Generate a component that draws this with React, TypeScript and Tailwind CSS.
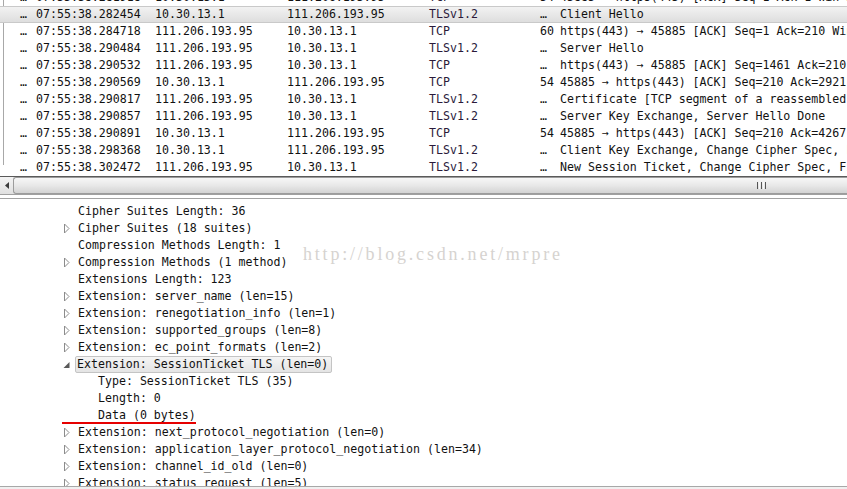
import React from "react";

const packets = [
  { t: "07:55:38.281918", s: "10.30.13.1", d: "111.206.193.95", p: "TCP", l: "54", i: "45885 → https(443) [ACK] Seq=1 Ack=1 Win=29312 Len=0" },
  { t: "07:55:38.282454", s: "10.30.13.1", d: "111.206.193.95", p: "TLSv1.2", l: "…", i: "Client Hello", sel: true },
  { t: "07:55:38.284718", s: "111.206.193.95", d: "10.30.13.1", p: "TCP", l: "60", i: "https(443) → 45885 [ACK] Seq=1 Ack=210 Win=30336 Len=0" },
  { t: "07:55:38.290484", s: "111.206.193.95", d: "10.30.13.1", p: "TLSv1.2", l: "…", i: "Server Hello" },
  { t: "07:55:38.290532", s: "111.206.193.95", d: "10.30.13.1", p: "TCP", l: "…", i: "https(443) → 45885 [ACK] Seq=1461 Ack=210 Win=30336" },
  { t: "07:55:38.290569", s: "10.30.13.1", d: "111.206.193.95", p: "TCP", l: "54", i: "45885 → https(443) [ACK] Seq=210 Ack=2921 Win=35072" },
  { t: "07:55:38.290817", s: "111.206.193.95", d: "10.30.13.1", p: "TLSv1.2", l: "…", i: "Certificate [TCP segment of a reassembled PDU]" },
  { t: "07:55:38.290857", s: "111.206.193.95", d: "10.30.13.1", p: "TLSv1.2", l: "…", i: "Server Key Exchange, Server Hello Done" },
  { t: "07:55:38.290891", s: "10.30.13.1", d: "111.206.193.95", p: "TCP", l: "54", i: "45885 → https(443) [ACK] Seq=210 Ack=4267 Win=37888" },
  { t: "07:55:38.298368", s: "10.30.13.1", d: "111.206.193.95", p: "TLSv1.2", l: "…", i: "Client Key Exchange, Change Cipher Spec, Finished" },
  { t: "07:55:38.302472", s: "111.206.193.95", d: "10.30.13.1", p: "TLSv1.2", l: "…", i: "New Session Ticket, Change Cipher Spec, Finished" },
];

type D = { text: string; kind: "none" | "closed" | "open" | "child"; sel?: boolean };
const details: D[] = [
  { text: "Cipher Suites Length: 36", kind: "none" },
  { text: "Cipher Suites (18 suites)", kind: "closed" },
  { text: "Compression Methods Length: 1", kind: "none" },
  { text: "Compression Methods (1 method)", kind: "closed" },
  { text: "Extensions Length: 123", kind: "none" },
  { text: "Extension: server_name (len=15)", kind: "closed" },
  { text: "Extension: renegotiation_info (len=1)", kind: "closed" },
  { text: "Extension: supported_groups (len=8)", kind: "closed" },
  { text: "Extension: ec_point_formats (len=2)", kind: "closed" },
  { text: "Extension: SessionTicket TLS (len=0)", kind: "open", sel: true },
  { text: "Type: SessionTicket TLS (35)", kind: "child" },
  { text: "Length: 0", kind: "child" },
  { text: "Data (0 bytes)", kind: "child" },
  { text: "Extension: next_protocol_negotiation (len=0)", kind: "closed" },
  { text: "Extension: application_layer_protocol_negotiation (len=34)", kind: "closed" },
  { text: "Extension: channel_id_old (len=0)", kind: "closed" },
  { text: "Extension: status_request (len=5)", kind: "closed" },
];

function Closed() {
  return (
    <svg width="7" height="11" viewBox="0 0 7 11" className="block">
      <path d="M1.5 1 L6 5.5 L1.5 10 Z" fill="#fff" stroke="#8c8c8c" strokeWidth="1" />
    </svg>
  );
}
function Open() {
  return (
    <svg width="7" height="10" viewBox="0 0 7 10" className="block">
      <path d="M6.5 2 L6.5 8 L0.5 8 Z" fill="#595959" />
    </svg>
  );
}

export default function App() {
  return (
    <div
      className="w-[847px] h-[489px] overflow-hidden bg-white text-[#111] flex flex-col"
      style={{ fontFamily: '"DejaVu Sans Mono", "Liberation Mono", monospace' }}
    >
      {/* packet list */}
      <div className="h-[176px] shrink-0 overflow-hidden pl-[3px]">
        <div className="h-full border-l border-[#a8a8a8] text-[11.6px] leading-[17px]">
          {packets.map((r, idx) => (
            <div
              key={idx}
              className={
                "flex h-[17px] whitespace-nowrap pl-[16px] " +
                (idx === 0 ? "-mt-[11px] " : "") +
                (r.sel
                  ? "bg-gradient-to-b from-[#f2f2f2] to-[#dedede] border-y border-[#c9c9c9] -ml-[4px] pl-[20px] leading-[15px]"
                  : "")
              }
            >
              <span className="w-[16px] shrink-0">…</span>
              <span className="w-[119px] shrink-0">{r.t}</span>
              <span className="w-[132px] shrink-0">{r.s}</span>
              <span className="w-[142px] shrink-0">{r.d}</span>
              <span className="w-[111px] shrink-0 text-[#2a1a3a]">{r.p}</span>
              <span className="w-[20px] shrink-0">{r.l}</span>
              <span className="shrink-0">{r.i}</span>
            </div>
          ))}
        </div>
      </div>

      {/* horizontal scrollbar */}
      <div className="h-[19px] shrink-0 border-t border-[#5a5a5a] border-b border-b-[#a0a0a0] bg-[#e9e9e9] flex">
        <div className="w-[13px] h-full flex items-center justify-center bg-gradient-to-b from-[#f4f4f4] to-[#e0e0e0]">
          <svg width="4" height="7" viewBox="0 0 4 7">
            <path d="M4 0 L0 3.5 L4 7 Z" fill="#3c3c3c" />
          </svg>
        </div>
        <div className="flex-1 h-full rounded-l-[3px] border border-[#9c9c9c] border-r-0 bg-gradient-to-b from-[#f7f7f7] via-[#e8e8e8] to-[#d3d3d3] flex items-center">
          <div className="ml-[743px] flex gap-[1px]">
            <div className="w-[1px] h-[7px] bg-[#555]" />
            <div className="w-[1px] h-[7px] bg-[#f8f8f8]" />
            <div className="w-[1px] h-[7px] bg-[#555]" />
            <div className="w-[1px] h-[7px] bg-[#f8f8f8]" />
            <div className="w-[1px] h-[7px] bg-[#555]" />
          </div>
        </div>
      </div>

      {/* splitter */}
      <div className="h-[4px] shrink-0 bg-white border-b border-[#a3a3a3]" />

      {/* details */}
      <div className="relative h-[287px] shrink-0 overflow-hidden pt-[4px] text-[11.6px] leading-[17px]">
        {details.map((d, idx) => (
          <div key={idx} className="flex h-[17px] items-center whitespace-nowrap">
            <div className="w-[63px] shrink-0" />
            <div className="w-[13px] shrink-0 flex items-center">
              {d.kind === "closed" && <Closed />}
              {d.kind === "open" && <Open />}
            </div>
            {d.kind === "child" && <div className="w-[20px] shrink-0" />}
            <span
              className={
                d.sel
                  ? "h-[17px] -ml-[1px] pl-[1px] pr-[3px] border border-[#c4c4c4] rounded-[2px] bg-gradient-to-b from-[#f5f5f5] to-[#e4e4e4] leading-[15px]"
                  : "ml-[2px]"
              }
            >
              {d.text}
            </span>
          </div>
        ))}

        {/* watermark */}
        <div
          className="absolute left-[303px] top-[45px] text-[18px] leading-[20px] text-[#d6d3d0] tracking-[2.8px] whitespace-nowrap"
          style={{ fontFamily: '"Liberation Serif", serif' }}
        >
          http://blog.csdn.net/mrpre
        </div>

        {/* red underline */}
        <div className="absolute left-[62px] top-[223px] w-[134px] h-[2px] bg-[#e60000]" />
      </div>

      <div className="flex-1 border-t border-[#a8a8a8] bg-[#f0f0f0]" />
    </div>
  );
}
